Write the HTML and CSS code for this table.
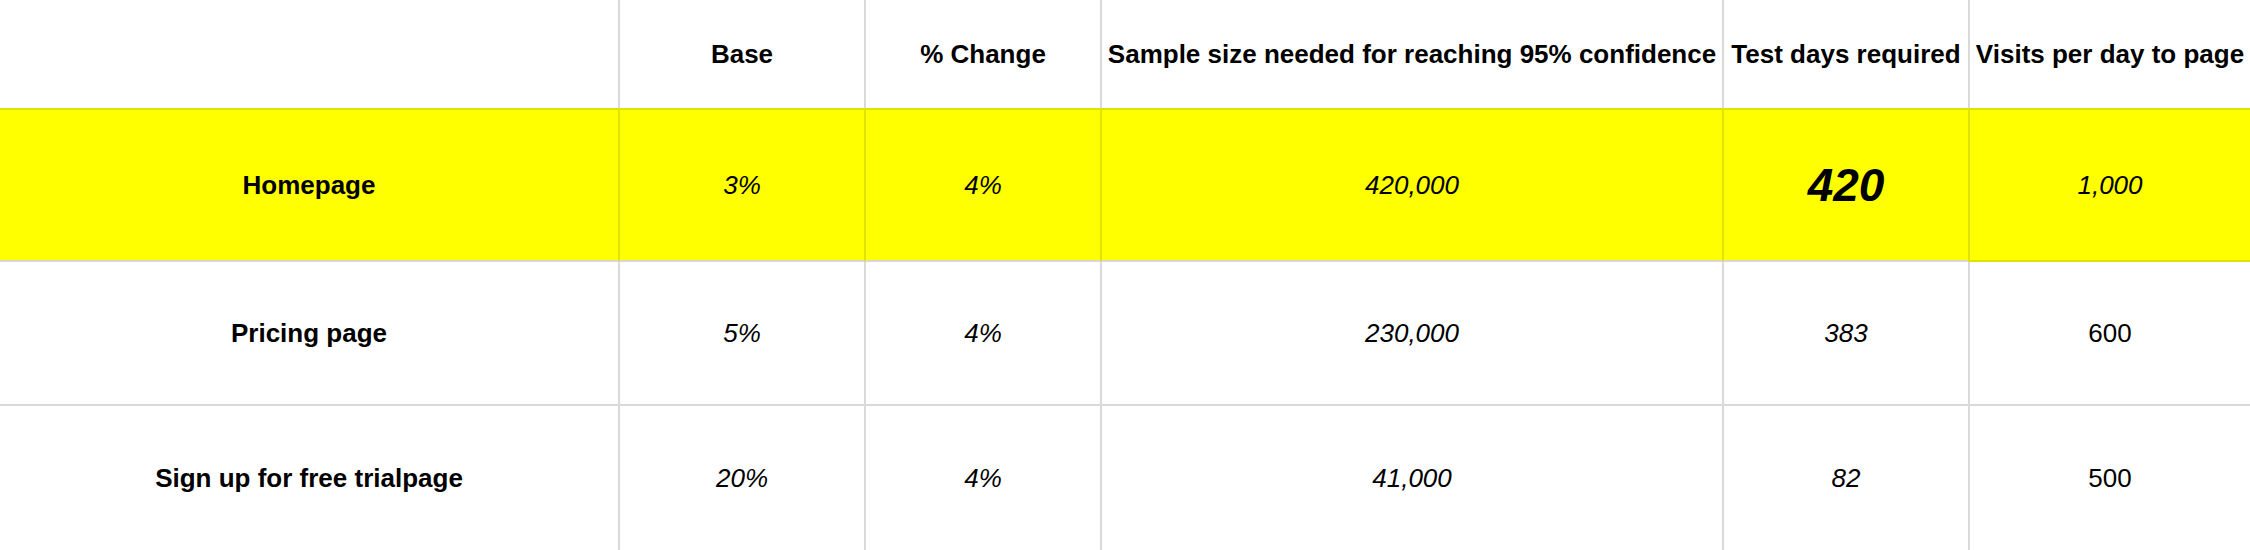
FILE: index.html
```html
<!DOCTYPE html>
<html lang="en">
<head>
<meta charset="utf-8">
<title>Test duration</title>
<link rel="stylesheet" href="styles.css">
</head>
<body>
<div class="sheet">
  <div class="cell head first"></div>
  <div class="cell head">Base</div>
  <div class="cell head">% Change</div>
  <div class="cell head">Sample size needed for reaching 95% confidence</div>
  <div class="cell head">Test days required</div>
  <div class="cell head">Visits per day to page</div>

  <div class="cell hl label first">Homepage</div>
  <div class="cell hl num">3%</div>
  <div class="cell hl num">4%</div>
  <div class="cell hl num">420,000</div>
  <div class="cell hl big">420</div>
  <div class="cell hl num last">1,000</div>

  <div class="cell row label first">Pricing page</div>
  <div class="cell row num">5%</div>
  <div class="cell row num">4%</div>
  <div class="cell row num">230,000</div>
  <div class="cell row num">383</div>
  <div class="cell row plain">600</div>

  <div class="cell row label first">Sign up for free trialpage</div>
  <div class="cell row num">20%</div>
  <div class="cell row num">4%</div>
  <div class="cell row num">41,000</div>
  <div class="cell row num">82</div>
  <div class="cell row plain">500</div>
</div>
</body>
</html>
```

FILE: styles.css
```css
html, body {
  margin: 0;
  padding: 0;
  background: #ffffff;
}

body {
  width: 2250px;
  height: 550px;
  overflow: hidden;
  font-family: "Liberation Sans", Arial, sans-serif;
  color: #000000;
}

.sheet {
  display: grid;
  grid-template-columns: 618px 246px 236px 622px 246px 282px;
  grid-template-rows: 108px 154px 144px 146px;
}

.cell {
  box-sizing: border-box;
  display: flex;
  align-items: center;
  justify-content: center;
  font-size: 26px;
  white-space: nowrap;
  border-left: 2px solid #d9d9d9;
}

.cell.first {
  border-left: none;
}

.head {
  font-weight: bold;
}

.hl {
  background: #ffff00;
  border-left-color: #e2e200;
  border-top: 2px solid #e2e200;
  border-bottom: 2px solid #d9d9d9;
}

.hl.last {
  border-bottom-color: #e2e200;
}

.row {
  border-bottom: 2px solid #d9d9d9;
}

.label {
  font-weight: bold;
}

.num {
  font-style: italic;
}

.plain {
  font-style: normal;
}

.big {
  font-size: 46px;
  font-weight: bold;
  font-style: italic;
}
```
